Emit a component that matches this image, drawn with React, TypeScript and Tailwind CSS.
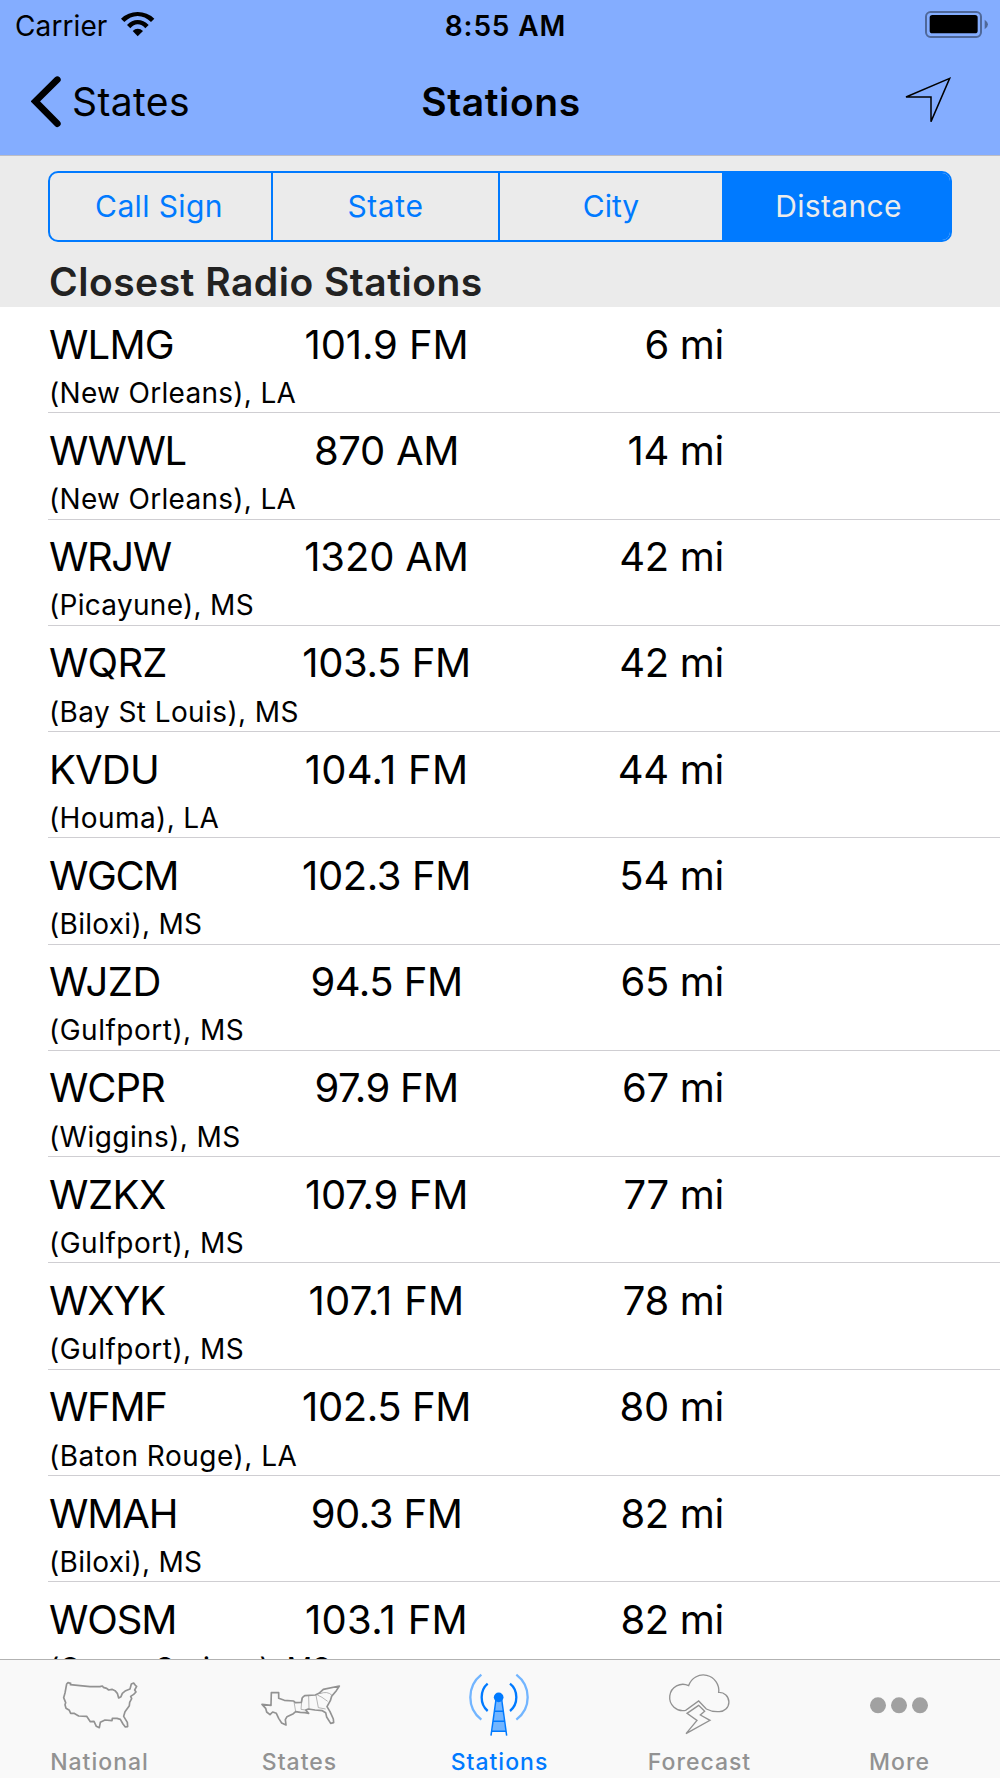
import type { ReactNode } from "react";

type Station = {
  call: string;
  freq: string;
  dist: string;
  city: string;
  callTracking: string;
  freqTracking: string;
  cityTracking: string;
};

const stations: Station[] = [
  { call: "WLMG", freq: "101.9 FM", dist: "6 mi", city: "(New Orleans), LA", callTracking: "tracking-[-0.8px]", freqTracking: "tracking-[-0.1px]", cityTracking: "tracking-[0.3px]" },
  { call: "WWWL", freq: "870 AM", dist: "14 mi", city: "(New Orleans), LA", callTracking: "tracking-[-1.6px]", freqTracking: "tracking-[-0.3px]", cityTracking: "tracking-[0.3px]" },
  { call: "WRJW", freq: "1320 AM", dist: "42 mi", city: "(Picayune), MS", callTracking: "tracking-[-1.4px]", freqTracking: "tracking-[-0.15px]", cityTracking: "tracking-[0.3px]" },
  { call: "WQRZ", freq: "103.5 FM", dist: "42 mi", city: "(Bay St Louis), MS", callTracking: "tracking-[-0.8px]", freqTracking: "tracking-[-0.4px]", cityTracking: "tracking-[0.4px]" },
  { call: "KVDU", freq: "104.1 FM", dist: "44 mi", city: "(Houma), LA", callTracking: "tracking-[-0.8px]", freqTracking: "tracking-[0.3px]", cityTracking: "tracking-[0.4px]" },
  { call: "WGCM", freq: "102.3 FM", dist: "54 mi", city: "(Biloxi), MS", callTracking: "tracking-[-1.4px]", freqTracking: "tracking-[-0.4px]", cityTracking: "tracking-[0.3px]" },
  { call: "WJZD", freq: "94.5 FM", dist: "65 mi", city: "(Gulfport), MS", callTracking: "tracking-[-0.5px]", freqTracking: "tracking-[-0.5px]", cityTracking: "tracking-[0.5px]" },
  { call: "WCPR", freq: "97.9 FM", dist: "67 mi", city: "(Wiggins), MS", callTracking: "tracking-[-1.1px]", freqTracking: "tracking-[-0.7px]", cityTracking: "tracking-[0.4px]" },
  { call: "WZKX", freq: "107.9 FM", dist: "77 mi", city: "(Gulfport), MS", callTracking: "tracking-[-0.5px]", freqTracking: "tracking-[-0.3px]", cityTracking: "tracking-[0.5px]" },
  { call: "WXYK", freq: "107.1 FM", dist: "78 mi", city: "(Gulfport), MS", callTracking: "tracking-[-1.2px]", freqTracking: "tracking-[0.3px]", cityTracking: "tracking-[0.5px]" },
  { call: "WFMF", freq: "102.5 FM", dist: "80 mi", city: "(Baton Rouge), LA", callTracking: "tracking-[-1.3px]", freqTracking: "tracking-[-0.4px]", cityTracking: "tracking-[0.5px]" },
  { call: "WMAH", freq: "90.3 FM", dist: "82 mi", city: "(Biloxi), MS", callTracking: "tracking-[-1.1px]", freqTracking: "tracking-[-0.5px]", cityTracking: "tracking-[0.3px]" },
  { call: "WOSM", freq: "103.1 FM", dist: "82 mi", city: "(Ocean Springs), MS", callTracking: "tracking-[-1.1px]", freqTracking: "tracking-[0.3px]", cityTracking: "tracking-[0.35px]" },
];

function StatusBar() {
  return (
    <div className="grid h-[50px] grid-cols-3 items-start pt-[8px] text-[28px] leading-[34px]">
      <div className="flex pl-[15px]">
        <span className="pt-px tracking-[0.1px]">Carrier</span>
        <svg className="mt-[3px] ml-[13px] h-[26px] w-[36px]" viewBox="0 0 108 78">
          <path d="M3 23Q24 3 53 3Q82 3 103 23L93 33Q75 15 53 15Q31 15 13 33Z" />
          <path d="M21 42Q35 27 53 27Q71 27 86 42L76 52Q66 40 53 40Q41 40 31 52Z" />
          <path d="M38 60Q45 53 53 53Q62 53 69 60L53 76Z" />
        </svg>
      </div>
      <div className="pt-px pl-[11px] text-center font-semibold tracking-[0.85px]">8:55 AM</div>
      <div className="flex justify-end pt-[3px] pr-[11px]">
        <svg className="h-[27px] w-[64px]" viewBox="0 0 192 81">
          <rect x="3" y="3" width="165" height="75" rx="14" fill="none" stroke="#4f6899" strokeWidth="6" />
          <rect x="14" y="12" width="144" height="55" rx="8" fill="#000" />
          <path d="M179 26Q189 33 189 40Q189 48 179 55Z" fill="#4f6899" />
        </svg>
      </div>
    </div>
  );
}

function NavBar() {
  return (
    <div className="grid flex-1 grid-cols-3 text-[39px] leading-[48px]">
      <div className="flex items-start pl-[31px]">
        <svg className="mt-[26px] h-[52px] w-[31px]" viewBox="0 0 93 156" fill="none" stroke="#000" strokeWidth="20" strokeLinecap="round">
          <path d="M79 11L13 76L79 143" />
        </svg>
        <span className="mt-[28px] ml-[10px] tracking-[0.4px]">States</span>
      </div>
      <h1 className="mt-[28px] pl-[2px] text-center font-semibold tracking-[0.57px]">Stations</h1>
      <div className="flex items-start justify-end pr-[48px]">
        <svg className="mt-[25px] h-[50px] w-[49px]" viewBox="0 0 147 150" fill="none" stroke="#000" strokeWidth="4.500">
          <path d="M140 10L9 66H84V140Z" />
        </svg>
      </div>
    </div>
  );
}

function Segments() {
  return (
    <div className="mx-[48px] mt-[15px] flex h-[71px] overflow-hidden rounded-[10px] border-[2.5px] border-[#007aff] text-[30px] leading-[66px] text-[#007aff]">
      <div className="w-[223px] border-r-2 border-[#007aff] pr-[3px] text-center tracking-[0.38px]">Call Sign</div>
      <div className="w-[227px] border-r-2 border-[#007aff] text-center tracking-[0.6px]">State</div>
      <div className="w-[222px] text-center">City</div>
      <div className="flex-1 bg-[#007aff] pl-[5px] text-center tracking-[0.35px] text-[#ececec]">Distance</div>
    </div>
  );
}

function Row({ s }: { s: Station }) {
  return (
    <li className="ml-[48px] h-[106.27px] shrink-0 border-b border-[#cfced2] pt-[15.6px] pl-px">
      <div className="grid h-[44px] grid-cols-[220px_235px_220px] text-[40px] leading-[44px]">
        <span className={s.callTracking}>{s.call}</span>
        <span className={`text-center ${s.freqTracking}`}>{s.freq}</span>
        <span className="text-right tracking-[-0.3px]">{s.dist}</span>
      </div>
      <div className={`mt-[9.3px] text-[28px] leading-[34px] ${s.cityTracking}`}>{s.city}</div>
    </li>
  );
}

const UsaIcon = () => (
  <svg className="h-[80px] w-[130px]" viewBox="0 0 390 240" fill="none" stroke="#929292" strokeWidth="5" strokeLinejoin="round">
    <path d="M80 72L84 68L92 70L91 74L120 77L150 80H180L187 78L190 82L200 85L206 90L216 88L225 92L232 100L236 114L243 110L247 100L257 92L270 87L274 72L281 69L286 76L290 79L284 90L288 96L281 103L272 109L275 116L269 127L268 137L255 155L251 169L262 187L263 200L256 201L249 192L241 178L231 175H217L216 182L195 180L181 187L178 203L169 199L162 184L151 185L140 169L116 168L102 160H92L88 151L78 145L75 134L77 128L71 113L75 99Z" />
  </svg>
);

const SouthIcon = () => (
  <svg className="h-[80px] w-[120px]" viewBox="0 0 360 240" fill="none" stroke="#929292" strokeLinejoin="round">
    <path d="M66 133L93 136L94 98H116V115L133 121L161 123L166 128L184 127L187 113L194 107L226 105L237 100L250 88L298 78L289 92L275 109L271 122L261 140L270 155L280 177L281 188L272 190L260 171L257 158L247 152L225 150L205 147L197 150L206 160L195 158L181 157L167 155L160 161L141 170L136 179L138 195L125 189L116 175L109 160L98 156L90 164L80 156L77 145Z" strokeWidth="5" />
    <path d="M162 125L167 155M186 114L183 148M183 148L196 150M206 108L207 147M228 106L235 143L257 147M232 105L246 112L263 124M240 101Q262 92 276 106" strokeWidth="2" />
  </svg>
);

const TowerIcon = () => (
  <svg className="h-[80px] w-[120px]" viewBox="0 0 360 240" fill="none" stroke="#007aff">
    <path d="M124 44Q91 70 91 112Q91 154 124 179M229 44Q263 70 263 112Q263 154 229 179" stroke="#72b5ff" strokeWidth="7" />
    <path d="M143 71Q125 86 125 112Q125 138 143 153M210 71Q229 86 229 112Q229 138 210 153" strokeWidth="7" />
    <path d="M168 118H184L197 214H156Z" fill="#72b5ff" stroke="none" />
    <path d="M168 118L153 227M185 118L200 227M163 154H190M160 184H195M156 214H198" strokeWidth="4.5" />
    <circle cx="176" cy="112" r="14.5" fill="#007aff" stroke="none" />
  </svg>
);

const StormIcon = () => (
  <svg className="h-[80px] w-[120px]" viewBox="0 0 360 240" fill="none" stroke="#929292" strokeWidth="4">
    <path d="M137 151A39.5 39.5 0 1 1 146 77A46.3 46.3 0 0 1 236 97A29.05 29.05 0 1 1 236 155Q216 156 199 147L176 123Z" />
    <path d="M176 136L141 160L171 181L138 221L210 181L181 165L194 154Z" />
  </svg>
);

const MoreIcon = () => (
  <svg className="h-[80px] w-[120px]" viewBox="0 0 360 240" fill="#a1a1a1">
    <circle cx="114" cy="136" r="24" />
    <circle cx="177" cy="136" r="24" />
    <circle cx="240" cy="136" r="24" />
  </svg>
);

function Tab({ label, icon, active, iconClass = "" }: { label: string; icon: ReactNode; active?: boolean; iconClass?: string }) {
  return (
    <div className={active ? "flex w-[200px] flex-col items-center text-[#007aff]" : "flex w-[200px] flex-col items-center text-[#929292]"}>
      <div className={iconClass}>{icon}</div>
      <span className="mt-[6px] pr-px text-[23px] leading-[32px] font-medium tracking-[1px]">{label}</span>
    </div>
  );
}

export default function App() {
  return (
    <div className="flex h-[1778px] w-[1000px] flex-col overflow-hidden bg-white font-[Inter,sans-serif] text-black">
      <header className="flex h-[156px] shrink-0 flex-col border-b border-[#bdbdc4] bg-[#84adff]">
        <StatusBar />
        <NavBar />
      </header>
      <section className="h-[151px] shrink-0 overflow-hidden bg-[#ebebeb]">
        <Segments />
        <h2 className="mt-[16px] pl-[49px] text-[39px] leading-[48px] font-semibold tracking-[0.5px] text-[#222]">Closest Radio Stations</h2>
      </section>
      <ul className="flex min-h-0 flex-1 flex-col overflow-hidden">
        {stations.map((s) => (
          <Row key={s.call} s={s} />
        ))}
      </ul>
      <nav className="flex h-[119px] shrink-0 border-t border-[#b2b2b2] bg-[#f9f9f9]">
        <Tab label="National" icon={<UsaIcon />} iconClass="pl-[10px]" />
        <Tab label="States" icon={<SouthIcon />} />
        <Tab label="Stations" icon={<TowerIcon />} active />
        <Tab label="Forecast" icon={<StormIcon />} />
        <Tab label="More" icon={<MoreIcon />} />
      </nav>
    </div>
  );
}
